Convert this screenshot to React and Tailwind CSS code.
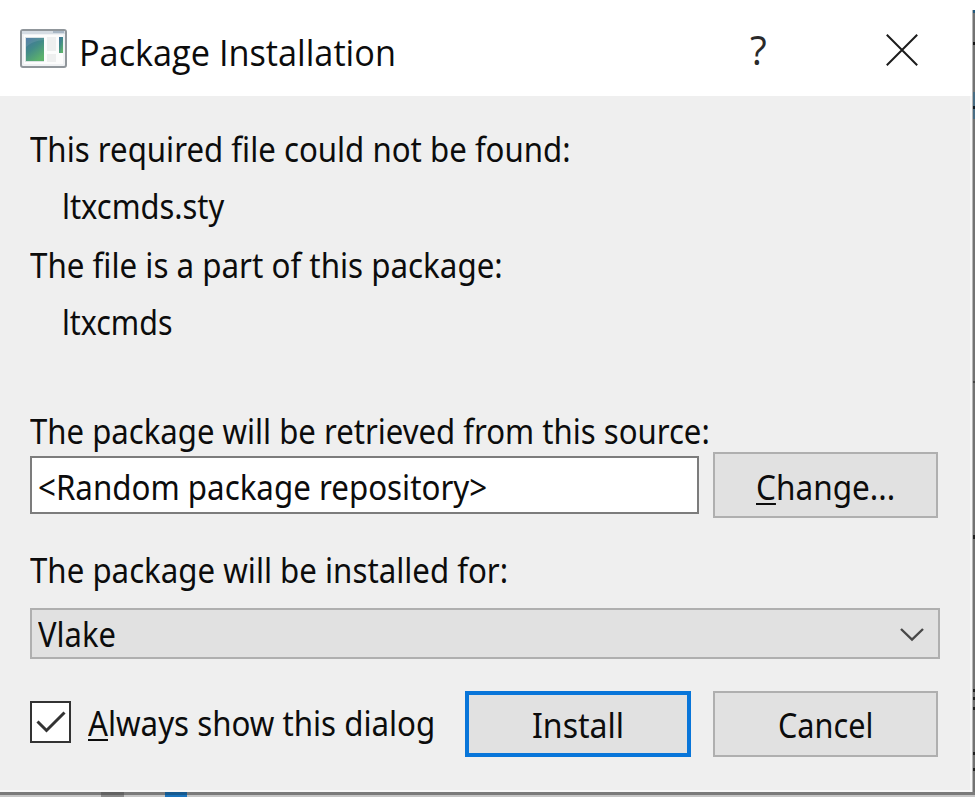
import { useLayoutEffect, useRef, useState } from "react";

// Single line of text condensed or stretched horizontally to fill its given width.
function Label({ width, className = "", children }) {
  const ref = useRef(null);
  const [scale, setScale] = useState(1);
  useLayoutEffect(() => {
    setScale(width / ref.current.offsetWidth);
  }, [width]);
  return (
    <span className={`block h-10 shrink-0 whitespace-nowrap ${className}`} style={{ width }}>
      <span ref={ref} className="inline-block origin-left" style={{ transform: `scaleX(${scale})` }}>
        {children}
      </span>
    </span>
  );
}

function Accel({ children }) {
  return <span className="underline decoration-[2px] underline-offset-[3px] [text-decoration-skip-ink:none]">{children}</span>;
}

function AppIcon() {
  return (
    <svg width="48" height="40" viewBox="0 0 48 40" className="shrink-0">
      <defs>
        <linearGradient id="pane" x1="0" y1="0" x2="0.6" y2="1">
          <stop offset="0" stopColor="#426fa0" />
          <stop offset="0.5" stopColor="#428b88" />
          <stop offset="1" stopColor="#5cb16c" />
        </linearGradient>
      </defs>
      <rect x="1" y="1" width="45" height="37" rx="2" fill="#f0f2f4" stroke="#90969b" strokeWidth="2" />
      <rect x="2" y="2" width="43" height="3" fill="#d5dce3" />
      <rect x="33" y="2" width="11" height="2" fill="#a9b7c5" />
      <rect x="4" y="6" width="39" height="29" fill="#fcfcfc" />
      <rect x="5" y="8" width="19" height="25" fill="#d9e3e4" />
      <rect x="6" y="9" width="18" height="23" fill="url(#pane)" />
      <path d="M6 18Q12 12 24 11V9H6z" fill="#fff" opacity="0.1" />
      <rect x="27" y="8" width="9" height="14" fill="#eeefef" />
      <rect x="27" y="25" width="9" height="8" fill="#eeefef" />
      <rect x="39" y="8" width="4" height="16" fill="url(#pane)" />
    </svg>
  );
}

export default function App() {
  return (
    <div className="flex h-[797px] w-[975px] flex-col overflow-hidden bg-white font-['Noto_Sans',sans-serif] text-[34.5px] leading-10 text-[#0c0c0c]">
      <div className="flex h-[792px]">
        <div className="flex w-[972px] flex-col">
          <header className="flex h-24 shrink-0 items-start bg-white pl-5 pt-[29px]">
            <AppIcon />
            <Label width={317} className="ml-[11px] mt-[4px] font-['Open_Sans',sans-serif] text-[36px]">
              Package Installation
            </Label>
            <Label width={17} className="ml-[354px] font-['Open_Sans',sans-serif] text-[41px] text-[#2a2a2a]">
              ?
            </Label>
            <svg width="32" height="32" viewBox="0 0 32 32" className="ml-[119px] mt-[5px]">
              <path d="M0.8 0.8L31.2 31.2M31.2 0.8L0.8 31.2" stroke="#1c1c1c" strokeWidth="2" />
            </svg>
          </header>

          <main className="flex grow flex-col border-b-2 border-r-2 border-[#f7f7f7] bg-[#efefef] pl-[30px] pt-[33px]">
            <Label width={541}>This required file could not be found:</Label>
            <Label width={162} className="ml-8 mt-[17px]">ltxcmds.sty</Label>
            <Label width={473} className="mt-[19px]">The file is a part of this package:</Label>
            <Label width={110} className="ml-8 mt-[17px]">ltxcmds</Label>
            <Label width={680} className="mt-[69px]">The package will be retrieved from this source:</Label>

            <div className="mt-px flex h-[66px]">
              <div className="mt-[4px] flex h-[58px] w-[669px] items-start border-2 border-[#7c7c7c] bg-white pl-[6px] pt-[9px]">
                <Label width={449}>&lt;Random package repository&gt;</Label>
              </div>
              <button className="ml-[14px] flex h-[66px] w-[225px] items-start justify-center border-2 border-[#afafaf] bg-[#e1e1e1] pt-[13px]">
                <Label width={139} className="text-left"><Accel>C</Accel>hange...</Label>
              </button>
            </div>

            <Label width={478} className="mt-8">The package will be installed for:</Label>
            <div className="mt-[18px] flex h-[51px] w-[910px] items-start border-2 border-[#afafaf] bg-[#e1e1e1] pl-[6px] pt-[4px]">
              <Label width={78}>Vlake</Label>
              <svg width="24" height="14" viewBox="0 0 24 14" className="ml-[784px] mt-[14px]">
                <path d="M1 1L12 11.5L23 1" fill="none" stroke="#484848" strokeWidth="2.4" />
              </svg>
            </div>

            <div className="mt-[32px] flex h-[66px] items-start">
              <div className="mt-[10px] flex h-[42px] w-[41px] shrink-0 items-center justify-center border-2 border-[#333333] bg-white">
                <svg width="30" height="22" viewBox="0 0 30 22">
                  <path d="M1.5 10.5L10.5 19.5L28.5 1.5" fill="none" stroke="#333333" strokeWidth="3" />
                </svg>
              </div>
              <Label width={347} className="ml-[17px] mt-[12px]"><Accel>A</Accel>lways show this dialog</Label>
              <button className="ml-[30px] flex h-[66px] w-[226px] shrink-0 items-start justify-center border-4 border-[#0875d9] bg-[#e1e1e1] pt-[10px]">
                <Label width={92} className="text-left">Install</Label>
              </button>
              <button className="ml-[22px] flex h-[66px] w-[225px] shrink-0 items-start justify-center border-2 border-[#afafaf] bg-[#e1e1e1] pt-[12px]">
                <Label width={95} className="text-left">Cancel</Label>
              </button>
            </div>
          </main>
        </div>

        <div className="mt-[10px] flex w-[3px] flex-col border-l border-[#b5b5b5] bg-[#737373]">
          <div className="h-[3px] bg-[#245a7d]" />
          <div className="mt-[29px] h-[3px] bg-[#151515]" />
          <div className="mt-[47px] h-[14px] bg-[#496d84]" />
          <div className="h-[3px] bg-[#101820]" />
          <div className="h-[10px] bg-[#496d84]" />
          <div className="mt-[262px] h-[2px] bg-[#454545]" />
          <div className="mt-[152px] h-[4px] bg-[#202020]" />
          <div className="mt-[150px] h-[3px] bg-[#202020]" />
          <div className="mt-[5px] h-[3px] bg-[#202020]" />
          <div className="mt-[7px] h-[3px] bg-[#202020]" />
          <div className="mt-[42px] h-[3px] bg-[#202020]" />
          <div className="mt-[13px] h-[3px] bg-[#202020]" />
        </div>
      </div>
      <div className="h-[3px] bg-[#7b7b7b]">
        <div className="flex h-[3px]">
          <div className="ml-[101px] w-[23px] bg-[#626262]" />
          <div className="ml-[41px] w-[22px] bg-[#165a90]" />
        </div>
      </div>
      <div className="h-[2px] bg-[#c6c6c6]">
        <div className="flex h-[2px]">
          <div className="ml-[101px] w-[23px] bg-[#8a8a8a]" />
          <div className="ml-[41px] w-[22px] bg-[#1b74bd]" />
        </div>
      </div>
    </div>
  );
}
